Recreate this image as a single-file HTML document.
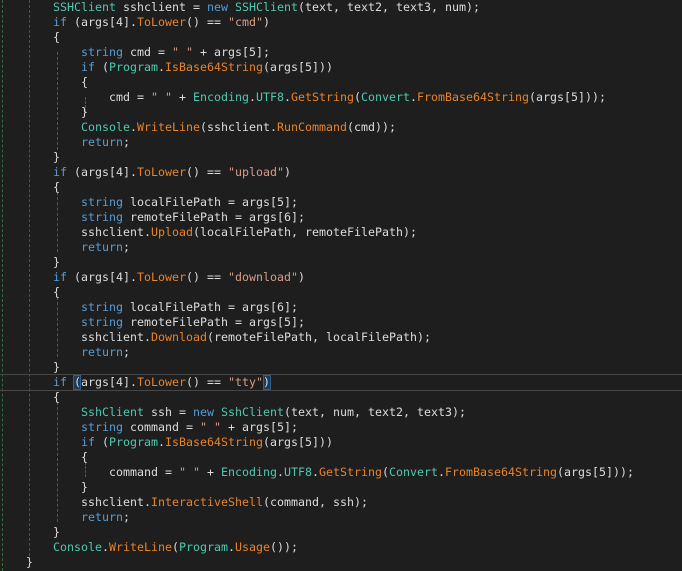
<!DOCTYPE html>
<html><head><meta charset="utf-8"><style>
html,body{margin:0;padding:0;background:#1e1e1e;width:682px;height:571px;overflow:hidden;position:relative}
.l{position:absolute;height:15px;line-height:15px;font-family:"DejaVu Sans Mono","Liberation Mono",monospace;font-size:11.63px;color:#dcdcdc;white-space:pre}
.k{color:#569cd6}.t{color:#4ec9b0}.m{color:#e8832a}.s{color:#d69d85}
.g{position:absolute;width:0;border-left:1px dashed}
.hl{position:absolute;left:0;width:682px;height:15px;border-top:1px solid #464646;border-bottom:1px solid #464646}
.br{position:absolute;background:#1e3a5a;border:1px solid #2f5f8f;height:13px}
</style></head><body>
<div class="g" style="left:2px;top:0;height:571px;border-color:#2f6d3a"></div>
<div class="g" style="left:29px;top:0;height:556px;border-color:#2a5a8a"></div>
<div class="g" style="left:57px;top:52px;height:98px;border-color:#2f6d3a"></div>
<div class="g" style="left:57px;top:192px;height:60px;border-color:#2f6d3a"></div>
<div class="g" style="left:57px;top:297px;height:60px;border-color:#2f6d3a"></div>
<div class="g" style="left:57px;top:402px;height:120px;border-color:#2f6d3a"></div>
<div class="g" style="left:85px;top:97px;height:15px;border-color:#2f6d3a"></div>
<div class="g" style="left:85px;top:462px;height:15px;border-color:#2f6d3a"></div>
<div class="hl" style="top:374px"></div>
<div class="br" style="left:73px;top:375px;width:6px"></div>
<div class="br" style="left:263px;top:375px;width:6px"></div>

<div class="l" style="left:53px;top:0px"><span class="t">SSHClient</span> sshclient = <span class="k">new</span> <span class="t">SSHClient</span>(text, text2, text3, num);</div>
<div class="l" style="left:53px;top:15px"><span class="k">if</span> (args[4].<span class="m">ToLower</span>() == <span class="s">"cmd"</span>)</div>
<div class="l" style="left:53px;top:30px">{</div>
<div class="l" style="left:81px;top:45px"><span class="k">string</span> cmd = <span class="s">" "</span> + args[5];</div>
<div class="l" style="left:81px;top:60px"><span class="k">if</span> (<span class="t">Program</span>.<span class="m">IsBase64String</span>(args[5]))</div>
<div class="l" style="left:81px;top:75px">{</div>
<div class="l" style="left:109px;top:90px">cmd = <span class="s">" "</span> + <span class="t">Encoding</span>.<span class="t">UTF8</span>.<span class="m">GetString</span>(<span class="t">Convert</span>.<span class="m">FromBase64String</span>(args[5]));</div>
<div class="l" style="left:81px;top:105px">}</div>
<div class="l" style="left:81px;top:120px"><span class="t">Console</span>.<span class="m">WriteLine</span>(sshclient.<span class="m">RunCommand</span>(cmd));</div>
<div class="l" style="left:81px;top:135px"><span class="k">return</span>;</div>
<div class="l" style="left:53px;top:150px">}</div>
<div class="l" style="left:53px;top:165px"><span class="k">if</span> (args[4].<span class="m">ToLower</span>() == <span class="s">"upload"</span>)</div>
<div class="l" style="left:53px;top:180px">{</div>
<div class="l" style="left:81px;top:195px"><span class="k">string</span> localFilePath = args[5];</div>
<div class="l" style="left:81px;top:210px"><span class="k">string</span> remoteFilePath = args[6];</div>
<div class="l" style="left:81px;top:225px">sshclient.<span class="m">Upload</span>(localFilePath, remoteFilePath);</div>
<div class="l" style="left:81px;top:240px"><span class="k">return</span>;</div>
<div class="l" style="left:53px;top:255px">}</div>
<div class="l" style="left:53px;top:270px"><span class="k">if</span> (args[4].<span class="m">ToLower</span>() == <span class="s">"download"</span>)</div>
<div class="l" style="left:53px;top:285px">{</div>
<div class="l" style="left:81px;top:300px"><span class="k">string</span> localFilePath = args[6];</div>
<div class="l" style="left:81px;top:315px"><span class="k">string</span> remoteFilePath = args[5];</div>
<div class="l" style="left:81px;top:330px">sshclient.<span class="m">Download</span>(remoteFilePath, localFilePath);</div>
<div class="l" style="left:81px;top:345px"><span class="k">return</span>;</div>
<div class="l" style="left:53px;top:360px">}</div>
<div class="l" style="left:53px;top:375px"><span class="k">if</span> (args[4].<span class="m">ToLower</span>() == <span class="s">"tty"</span>)</div>
<div class="l" style="left:53px;top:390px">{</div>
<div class="l" style="left:81px;top:405px"><span class="t">SshClient</span> ssh = <span class="k">new</span> <span class="t">SshClient</span>(text, num, text2, text3);</div>
<div class="l" style="left:81px;top:420px"><span class="k">string</span> command = <span class="s">" "</span> + args[5];</div>
<div class="l" style="left:81px;top:435px"><span class="k">if</span> (<span class="t">Program</span>.<span class="m">IsBase64String</span>(args[5]))</div>
<div class="l" style="left:81px;top:450px">{</div>
<div class="l" style="left:109px;top:465px">command = <span class="s">" "</span> + <span class="t">Encoding</span>.<span class="t">UTF8</span>.<span class="m">GetString</span>(<span class="t">Convert</span>.<span class="m">FromBase64String</span>(args[5]));</div>
<div class="l" style="left:81px;top:480px">}</div>
<div class="l" style="left:81px;top:495px">sshclient.<span class="m">InteractiveShell</span>(command, ssh);</div>
<div class="l" style="left:81px;top:510px"><span class="k">return</span>;</div>
<div class="l" style="left:53px;top:525px">}</div>
<div class="l" style="left:53px;top:540px"><span class="t">Console</span>.<span class="m">WriteLine</span>(<span class="t">Program</span>.<span class="m">Usage</span>());</div>
<div class="l" style="left:26px;top:555px">}</div>
</body></html>
